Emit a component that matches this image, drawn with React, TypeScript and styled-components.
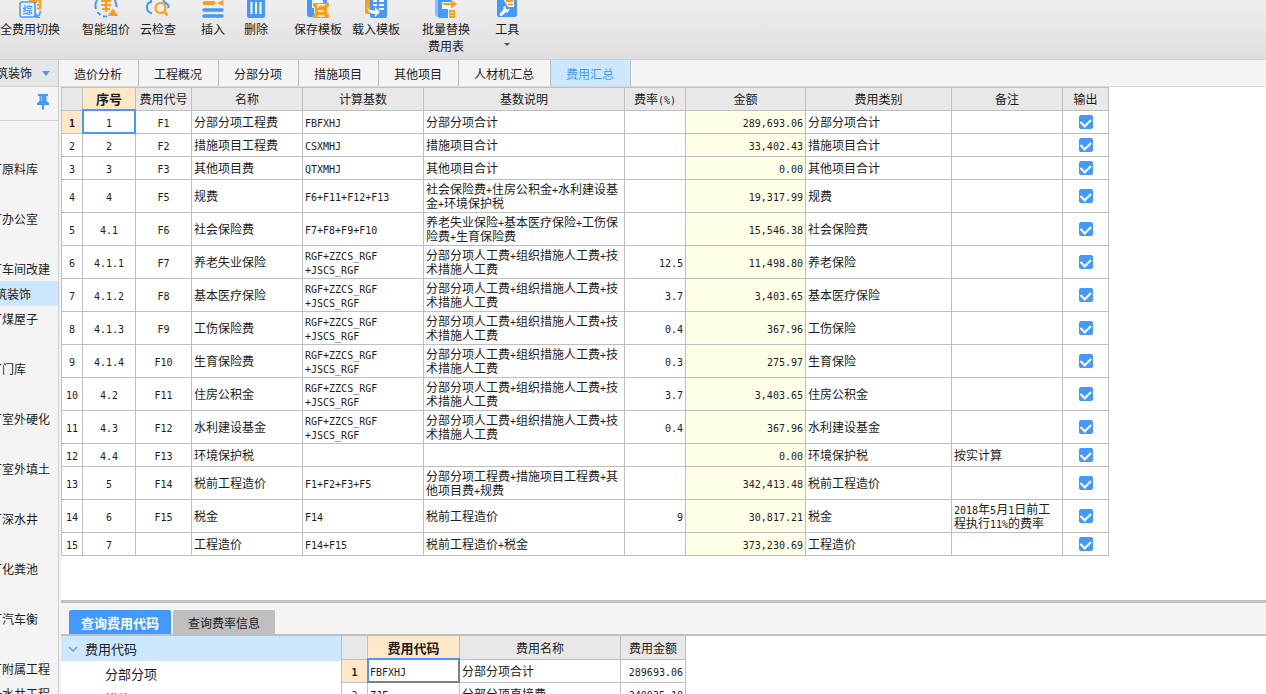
import React, { Fragment, useState } from "react";
import styled, { createGlobalStyle } from "styled-components";

const BLUE = "#4499ff";
const ORANGE = "#ff9c1a";
const GRID = "#bfbfbf";
const PALE = "#f4f4f4";
const SELECT = "#cce8ff";
const HEAD = "#e8e8e8";
const PEACH = "#ffe7c8";

const GlobalStyle = createGlobalStyle`
  * { box-sizing: border-box; }
  html, body, #root { height: 100%; margin: 0; }
  body {
    overflow: hidden;
    background: #fff;
    color: #1c1c1c;
    font: 12px/14px "Noto Sans CJK SC", sans-serif;
  }
  button, input { font: inherit; color: inherit; margin: 0; padding: 0; }
`;

const Page = styled.div`
  display: flex;
  flex-direction: column;
  height: 100%;
`;

const Toolbar = styled.header`
  display: flex;
  align-items: flex-start;
  height: 60px;
  flex: none;
  background: linear-gradient(#efefef, #dedede);
  border-bottom: 1px solid #cfcfcf;
`;

const ToolButton = styled.button<{ $gap: number }>`
  display: flex;
  flex-direction: column;
  align-items: center;
  flex: none;
  margin-left: ${(p) => p.$gap}px;
  border: 0;
  background: none;
  line-height: 17px;
  text-align: center;
  white-space: pre-line;
  svg { margin-bottom: 2px; }
`;

const Arrow = styled.span<{ $color: string; $size: number }>`
  border: ${(p) => p.$size}px solid transparent;
  border-top-color: ${(p) => p.$color};
  border-bottom: 0;
`;

const ToolArrow = styled(Arrow)`
  margin-top: 6px;
`;

const ProjectArrow = styled(Arrow)`
  border-top-width: 5px;
`;

const Body = styled.div`
  display: flex;
  flex: 1;
  min-height: 0;
`;

const Sidebar = styled.aside`
  display: flex;
  flex-direction: column;
  flex: none;
  width: 59px;
  overflow: hidden;
  background: ${PALE};
  border-right: 1px solid #cccccc;
`;

const Project = styled.button`
  display: flex;
  align-items: center;
  justify-content: flex-end;
  gap: 10px;
  flex: none;
  height: 27px;
  padding-right: 8px;
  border: 0;
  border-bottom: 1px solid #d4d4d4;
  background: #e6e6e6;
  white-space: nowrap;
`;

const PinRow = styled.div`
  display: flex;
  justify-content: flex-end;
  align-items: center;
  flex: none;
  height: 34px;
  padding: 0 9px 4px 0;
  border-bottom: 1px solid #d4d4d4;
`;

const IconButton = styled.button`
  display: flex;
  border: 0;
  background: none;
`;

const Units = styled.ul`
  margin: 10px 0 0;
  padding: 0;
  list-style: none;
`;

const Unit = styled.li<{ $active?: boolean }>`
  height: 25px;
  line-height: 25px;
  text-indent: ${(p) => (p.$active ? -17 : -10)}px;
  white-space: nowrap;
  background: ${(p) => (p.$active ? SELECT : "transparent")};
`;

const Main = styled.main`
  display: flex;
  flex-direction: column;
  flex: 1;
  min-width: 0;
  background: ${PALE};
`;

const TabBar = styled.nav`
  display: flex;
  flex: none;
  height: 27px;
  border-bottom: 1px solid #d9d9d9;
`;

const Tab = styled.button<{ $active: boolean }>`
  padding: 2px 16px 0 15px;
  border: 0;
  border-right: 1px solid ${GRID};
  background: ${(p) => (p.$active ? SELECT : PALE)};
  color: ${(p) => (p.$active ? BLUE : "inherit")};
`;

const Upper = styled.section`
  flex: 1;
  min-height: 0;
  overflow: hidden;
  margin-left: 2px;
  background: #fff;
`;

const Lower = styled.section`
  display: flex;
  flex-direction: column;
  flex: none;
  height: 94px;
  margin-left: 2px;
  border-top: 3px solid ${GRID};
`;

const QueryTabs = styled.nav`
  display: flex;
  gap: 2px;
  flex: none;
  padding: 7px 8px 0;
  border-bottom: 2px solid ${GRID};
`;

const QueryTab = styled.button<{ $active: boolean }>`
  width: 102px;
  height: 24px;
  padding-top: 2px;
  border: 0;
  border-radius: 2px 2px 0 0;
  background: ${(p) => (p.$active ? BLUE : GRID)};
  color: ${(p) => (p.$active ? "#fff" : "inherit")};
  font-weight: ${(p) => (p.$active ? 700 : 400)};
  font-size: ${(p) => (p.$active ? 13 : 12)}px;
`;

const LowerBody = styled.div`
  display: flex;
  flex: 1;
  min-height: 0;
  overflow: hidden;
  background: #fff;
`;

const Tree = styled.ul`
  flex: none;
  width: 280px;
  margin: 0;
  padding: 0;
  list-style: none;
  font-size: 13px;
`;

const TreeItem = styled.li<{ $root?: boolean }>`
  display: flex;
  align-items: center;
  gap: 7px;
  height: 25px;
  padding-left: ${(p) => (p.$root ? 7 : 44)}px;
  background: ${(p) => (p.$root ? SELECT : "#fff")};
`;

const Grid = styled.table<{ $width: number }>`
  width: ${(p) => p.$width}px;
  table-layout: fixed;
  border-collapse: separate;
  border-spacing: 0;
  border-top: 1px solid ${GRID};
  border-left: 1px solid ${GRID};
  background: #fff;
`;

const LowerGrid = styled(Grid)`
  flex: none;
  align-self: flex-start;
  border-top: 0;
`;

const Row = styled.tr<{ $tall?: boolean }>`
  height: ${(p) => (p.$tall ? 33 : 23)}px;
`;

const HeadRow = styled(Row)`
  height: ${(p) => (p.$tall ? 24 : 23)}px;
`;

const HeadCell = styled.th<{ $active?: boolean }>`
  padding: 0;
  border-right: 1px solid ${GRID};
  border-bottom: 1px solid ${GRID};
  background: ${(p) => (p.$active ? PEACH : HEAD)};
  font-size: ${(p) => (p.$active ? 13 : 12)}px;
  font-weight: ${(p) => (p.$active ? 700 : 400)};
  text-align: center;
  white-space: nowrap;
`;

const RowHead = styled(HeadCell)`
  background: ${(p) => (p.$active ? PEACH : "#fff")};
`;

const Cell = styled.td<{ $align?: string; $tint?: boolean; $selected?: "full" | "edit" }>`
  position: relative;
  padding: 0 2px;
  border-right: 1px solid ${GRID};
  border-bottom: 1px solid ${GRID};
  background: ${(p) => (p.$tint ? "#ffffe8" : "#fff")};
  text-align: ${(p) => p.$align ?? "left"};
  word-break: break-all;
  &::after {
    content: ${(p) => (p.$selected ? '""' : "none")};
    position: absolute;
    inset: -2px -1px -1px -1px;
    border: 2px solid ${BLUE};
    border-right-color: ${(p) => (p.$selected === "edit" ? "#808080" : BLUE)};
    border-bottom-color: ${(p) => (p.$selected === "edit" ? "#808080" : BLUE)};
  }
`;

const Half = styled.span`
  font-family: "DejaVu Sans Mono", monospace;
  font-size: 10px;
  line-height: 1px;
`;

const Tick = styled.input`
  appearance: none;
  display: block;
  width: 14px;
  height: 14px;
  margin: 0 auto;
  border: 1px solid ${BLUE};
  border-radius: 2px;
  &:checked { background: ${BLUE}; }
  &:checked::after {
    content: "";
    display: block;
    width: 5px;
    height: 8px;
    margin: 1px 0 0 3px;
    border: solid #fff;
    border-width: 0 2px 2px 0;
    transform: rotate(45deg);
    transform-origin: 50% 40%;
  }
`;

/* Half-width characters are set in a monospaced face, two to one ideograph. */
function Text({ children }: { children: string }) {
  return (
    <>
      {children.split(/([\x20-\x7e]+)/).map((part, i) =>
        i % 2 ? <Half key={i}>{part}</Half> : <Fragment key={i}>{part}</Fragment>
      )}
    </>
  );
}

const Icon = ({ children }: { children: React.ReactNode }) => (
  <svg width="24" height="18" viewBox="0 0 24 18" fill="none" aria-hidden="true">
    {children}
  </svg>
);

const icons = {
  swap: (
    <Icon>
      <path d="M11 0h11v8.500h-3M15 2h4M19 5h2" stroke={ORANGE} strokeWidth="2" />
      <rect x="2" y="2" width="15" height="15" rx="2" fill="#eef5fd" stroke={BLUE} strokeWidth="1.600" />
      <text x="4.500" y="13.500" fontSize="10" fontWeight="700" fill={BLUE}>综</text>
      <path d="M22.500 11l-1 4-3 1.500M18 13.500v4h4" stroke={BLUE} strokeWidth="1.600" />
    </Icon>
  ),
  price: (
    <Icon>
      <path d="M3 0A11 11 0 0 0 2 9M3.500 12a10 10 0 0 0 3 3M20.500 0A11 11 0 0 1 22.500 7M9 16.500h4" stroke={BLUE} strokeWidth="2" />
      <path d="M7 1h10M7 5h10M12 0v12M8 9h8" stroke={ORANGE} strokeWidth="2" />
      <path d="M14 16q0-2 2-3l2-3.500q1-1 2 0l2 3.500q2 1 2 3z" fill={ORANGE} />
    </Icon>
  ),
  cloud: (
    <Icon>
      <path d="M5 0v2Q1 3 1 7q0 6 5 6M17 0q1 1 1.500 2.500Q23 4 22.500 8" stroke={BLUE} strokeWidth="2" />
      <circle cx="14.500" cy="8" r="5" stroke={ORANGE} strokeWidth="2.200" />
      <path d="M18 11.500l3.500 4" stroke={ORANGE} strokeWidth="2.600" />
    </Icon>
  ),
  insert: (
    <Icon>
      <path d="M3.500 3h9" stroke={ORANGE} strokeWidth="4" strokeLinecap="round" />
      <path d="M22.500 0v6L16 3z" fill={ORANGE} />
      <path d="M3 10h18M3 16h18" stroke={BLUE} strokeWidth="3.600" strokeLinecap="round" />
    </Icon>
  ),
  remove: (
    <Icon>
      <path d="M3 0h18v16q0 2-2 2H5q-2 0-2-2z" fill={BLUE} />
      <path d="M7.500 2v12M12 2v12M16.500 2v12" stroke="#fff" strokeWidth="2" />
    </Icon>
  ),
  save: (
    <Icon>
      <path d="M1 0h20v6H8v11H3q-2 0-2-2z" fill={BLUE} />
      <path d="M6 0h11v3h-5v5H6z" fill="#fff" />
      <path d="M7 3h16v3l-2 2v5l2 2v3H7v-3l2-2V8L7 6z" fill={ORANGE} />
      <path d="M12 8V5h7M12 11h5.500M11.500 16h7" stroke="#fff" strokeWidth="1.600" />
    </Icon>
  ),
  load: (
    <Icon>
      <path d="M1 0h7v14H3q-2 0-2-2z" fill={ORANGE} />
      <path d="M6 0h17v16q0 2-2 2H8q-2 0-2-2z" fill={BLUE} />
      <path d="M9 1h4M15 1h5M9 5h4M15 5h5M15 9h5" stroke="#fff" strokeWidth="2" />
      <path d="M3 7q2 4 8 3.500V7l5 5-5 5v-3Q4 14 3 7z" fill="#fff" />
    </Icon>
  ),
  batch: (
    <Icon>
      <path d="M1 0h3v17H3q-2-1-2-3z" fill="#8abfff" />
      <path d="M4 0h13v18H6q-2 0-2-2z" fill={BLUE} />
      <path d="M8 2h15v5l-6 5v6h-3V9H8z" fill="#eef5fd" />
      <path d="M9 3h8v2H9zM17 0l6 4-6 4.500z" fill={ORANGE} />
      <path d="M15 10h6v8h-6z" fill={ORANGE} />
      <path d="M16 12.500h4M16 15.500h4" stroke="#ffd9a0" />
    </Icon>
  ),
  tools: (
    <Icon>
      <path d="M2 0h20v15q0 2-2 2H4q-2 0-2-2z" fill={BLUE} />
      <path d="M9 0h10v7h-6z" fill="#fff" />
      <path d="M11 1h7M13 4.500h5" stroke={ORANGE} strokeWidth="2" />
      <path d="M4.500 14l4-4.500q-1-3 2-4v3l2 1 2-1q0 4-4 4L6.500 16q-2 .5-2-2z" fill="#fff" />
    </Icon>
  ),
};

const tools: { label: string; icon: React.ReactNode; gap: number; menu?: boolean }[] = [
  { label: "全费用切换", icon: icons.swap, gap: 0 },
  { label: "智能组价", icon: icons.price, gap: 22 },
  { label: "云检查", icon: icons.cloud, gap: 10 },
  { label: "插入", icon: icons.insert, gap: 25 },
  { label: "删除", icon: icons.remove, gap: 19 },
  { label: "保存模板", icon: icons.save, gap: 26 },
  { label: "载入模板", icon: icons.load, gap: 10 },
  { label: "批量替换\n费用表", icon: icons.batch, gap: 22 },
  { label: "工具", icon: icons.tools, gap: 25, menu: true },
];

const units = [
  "", "厂原料库", "", "厂办公室", "", "厂车间改建", "建筑装饰", "厂煤屋子", "", "厂门库", "",
  "厂室外硬化", "", "厂室外填土", "", "厂深水井", "", "厂化粪池", "", "厂汽车衡", "", "厂附属工程", "一水井工程",
];

const tabs = ["造价分析", "工程概况", "分部分项", "措施项目", "其他项目", "人材机汇总", "费用汇总"];

const columns: [string, number][] = [
  ["", 21], ["序号", 53], ["费用代号", 56], ["名称", 111], ["计算基数", 121], ["基数说明", 201],
  ["费率(%)", 61], ["金额", 120], ["费用类别", 146], ["备注", 111], ["输出", 46],
];

const LABOUR = "RGF+ZZCS_RGF\n+JSCS_RGF";
const LABOUR_NOTE = "分部分项人工费+组织措施人工费+技术措施人工费";

/* no., code, name, base, base note, rate, amount, category, remark */
const rows: string[][] = [
  ["1", "F1", "分部分项工程费", "FBFXHJ", "分部分项合计", "", "289,693.06", "分部分项合计", ""],
  ["2", "F2", "措施项目工程费", "CSXMHJ", "措施项目合计", "", "33,402.43", "措施项目合计", ""],
  ["3", "F3", "其他项目费", "QTXMHJ", "其他项目合计", "", "0.00", "其他项目合计", ""],
  ["4", "F5", "规费", "F6+F11+F12+F13", "社会保险费+住房公积金+水利建设基金+环境保护税", "", "19,317.99", "规费", ""],
  ["4.1", "F6", "社会保险费", "F7+F8+F9+F10", "养老失业保险+基本医疗保险+工伤保险费+生育保险费", "", "15,546.38", "社会保险费", ""],
  ["4.1.1", "F7", "养老失业保险", LABOUR, LABOUR_NOTE, "12.5", "11,498.80", "养老保险", ""],
  ["4.1.2", "F8", "基本医疗保险", LABOUR, LABOUR_NOTE, "3.7", "3,403.65", "基本医疗保险", ""],
  ["4.1.3", "F9", "工伤保险费", LABOUR, LABOUR_NOTE, "0.4", "367.96", "工伤保险", ""],
  ["4.1.4", "F10", "生育保险费", LABOUR, LABOUR_NOTE, "0.3", "275.97", "生育保险", ""],
  ["4.2", "F11", "住房公积金", LABOUR, LABOUR_NOTE, "3.7", "3,403.65", "住房公积金", ""],
  ["4.3", "F12", "水利建设基金", LABOUR, LABOUR_NOTE, "0.4", "367.96", "水利建设基金", ""],
  ["4.4", "F13", "环境保护税", "", "", "", "0.00", "环境保护税", "按实计算"],
  ["5", "F14", "税前工程造价", "F1+F2+F3+F5", "分部分项工程费+措施项目工程费+其他项目费+规费", "", "342,413.48", "税前工程造价", ""],
  ["6", "F15", "税金", "F14", "税前工程造价", "9", "30,817.21", "税金", "2018年5月1日前工程执行11%的费率"],
  ["7", "", "工程造价", "F14+F15", "税前工程造价+税金", "", "373,230.69", "工程造价", ""],
];

const aligns = ["center", "center", "left", "left", "left", "right", "right", "left", "left"];

const Multiline = styled.span`
  white-space: pre-line;
`;

const codeColumns: [string, number][] = [["", 26], ["费用代码", 92], ["费用名称", 161], ["费用金额", 65]];
const codes = [
  ["FBFXHJ", "分部分项合计", "289693.06"],
  ["ZJF", "分部分项直接费", "240035.10"],
];

export default function App() {
  const [tab, setTab] = useState("费用汇总");
  const [query, setQuery] = useState("查询费用代码");
  return (
    <Page>
      <GlobalStyle />
      <Toolbar>
        {tools.map((t) => (
          <ToolButton key={t.label} $gap={t.gap}>
            {t.icon}
            {t.label}
            {t.menu && <ToolArrow $color="#555" $size={3} />}
          </ToolButton>
        ))}
      </Toolbar>
      <Body>
        <Sidebar>
          <Project>
            建筑装饰
            <ProjectArrow $color={BLUE} $size={4} />
          </Project>
          <PinRow>
            <IconButton aria-label="固定">
              <svg width="12" height="16" viewBox="0 0 12 16" fill={BLUE} aria-hidden="true">
                <path d="M1 0h10v2H9.500v5l2.500 2v2H7v4l-1 1-1-1v-4H0V9l2.500-2V2H1z" />
                <path d="M4.500 2v5" stroke="#a8d0ff" />
              </svg>
            </IconButton>
          </PinRow>
          <Units>
            {units.map((u, i) => (
              <Unit key={i} $active={u === "建筑装饰"}>{u}</Unit>
            ))}
          </Units>
        </Sidebar>
        <Main>
          <TabBar>
            {tabs.map((t) => (
              <Tab key={t} $active={t === tab} onClick={() => setTab(t)}>{t}</Tab>
            ))}
          </TabBar>
          <Upper>
            <Grid $width={1048}>
              <colgroup>
                {columns.map(([name, w]) => <col key={name} width={w} />)}
              </colgroup>
              <thead>
                <HeadRow>
                  {columns.map(([name], i) => (
                    <HeadCell key={name} scope="col" $active={i === 1}><Text>{name}</Text></HeadCell>
                  ))}
                </HeadRow>
              </thead>
              <tbody>
                {rows.map((r, i) => (
                  <Row key={i} $tall={r[3] === LABOUR || r[4].length > 17 || r[8].length > 12}>
                    <RowHead scope="row" $active={i === 0}><Text>{String(i + 1)}</Text></RowHead>
                    {r.map((v, c) => (
                      <Cell key={c} $align={aligns[c]} $tint={c === 6} $selected={i === 0 && c === 0 ? "full" : undefined}>
                        <Multiline><Text>{v}</Text></Multiline>
                      </Cell>
                    ))}
                    <Cell>
                      <Tick type="checkbox" defaultChecked aria-label={`输出 ${r[2]}`} />
                    </Cell>
                  </Row>
                ))}
              </tbody>
            </Grid>
          </Upper>
          <Lower>
            <QueryTabs>
              {["查询费用代码", "查询费率信息"].map((q) => (
                <QueryTab key={q} $active={q === query} onClick={() => setQuery(q)}>{q}</QueryTab>
              ))}
            </QueryTabs>
            <LowerBody>
              <Tree>
                <TreeItem $root>
                  <svg width="10" height="6" viewBox="0 0 10 6" fill="none" aria-hidden="true">
                    <path d="M1 1l4 4 4-4" stroke="#8c9aa6" strokeWidth="1.500" />
                  </svg>
                  费用代码
                </TreeItem>
                <TreeItem>分部分项</TreeItem>
                <TreeItem>措施项目</TreeItem>
              </Tree>
              <LowerGrid $width={345}>
                <colgroup>
                  {codeColumns.map(([name, w]) => <col key={name} width={w} />)}
                </colgroup>
                <thead>
                  <HeadRow $tall>
                    {codeColumns.map(([name], i) => (
                      <HeadCell key={name} scope="col" $active={i === 1}>{name}</HeadCell>
                    ))}
                  </HeadRow>
                </thead>
                <tbody>
                  {codes.map((r, i) => (
                    <Row key={i}>
                      <RowHead scope="row" $active={i === 0}><Text>{String(i + 1)}</Text></RowHead>
                      {r.map((v, c) => (
                        <Cell key={c} $align={c === 2 ? "right" : "left"} $selected={i === 0 && c === 0 ? "edit" : undefined}>
                          <Text>{v}</Text>
                        </Cell>
                      ))}
                    </Row>
                  ))}
                </tbody>
              </LowerGrid>
            </LowerBody>
          </Lower>
        </Main>
      </Body>
    </Page>
  );
}
